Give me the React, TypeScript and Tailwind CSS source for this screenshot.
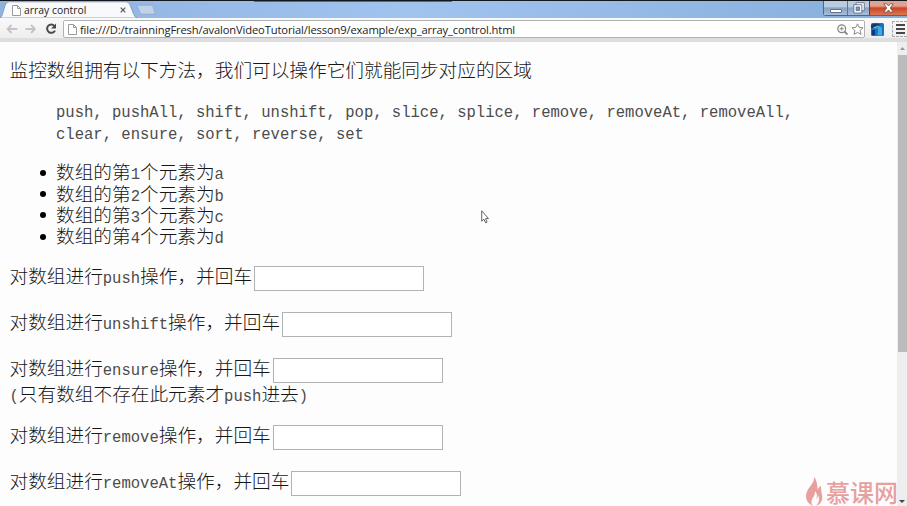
import React from 'react';

const CJK = "font-['Noto_Sans_CJK_SC',sans-serif]";

function Mixed({ text }: { text: string }) {
  const parts = text.split(/([\x20-\x7e]+)/).filter(Boolean);
  return (
    <>
      {parts.map((p, i) =>
        /^[\x20-\x7e]/.test(p) ? (
          <span key={i} className="inline-block origin-[50%_70%] scale-y-[1.1] whitespace-pre font-['Liberation_Mono',monospace] text-[15.56px] leading-[17px] text-[#4c4c4c]">{p}</span>
        ) : (
          <span key={i} className="inline-block">{p}</span>
        ),
      )}
    </>
  );
}

function PageIcon() {
  return (
    <svg width="9" height="11" viewBox="0 0 9 11" className="shrink-0" fill="#fff" stroke="#9a9a9a">
      <path d="M.5.5h5l3 3v7h-8z" />
      <path d="M5.500.5v3h3" fill="none" />
    </svg>
  );
}

function TabBar() {
  return (
    <div className="relative flex h-[18px] shrink-0 border-t border-[#15171f] bg-linear-to-r from-[#8fb2de] via-[#a0c4ee] via-45% to-[#86afdb]">
      <svg width="160" height="17" viewBox="0 0 160 17" className="absolute left-0 top-0">
        <path d="M0 17C3 16 4 4 7 1.500L9 .8H126q3 0 4 3l3.500 9q1.500 4 4 4.200z" fill="#f8f9fa" stroke="#7892b5" strokeWidth=".8" />
        <path d="M138 4.200h13q1.500 0 2 1.500l2 6q.5 1.500-1 1.500h-12q-1.500 0-2-1.500l-2.500-6q-.5-1.500.5-1.500z" fill="#bfd2ea" stroke="#8ba8ce" strokeWidth=".8" />
      </svg>
      <div className="relative flex h-full w-[128px] items-center pl-[12px] pt-[1px]">
        <PageIcon />
        <span className="ml-[3px] w-[96px] whitespace-nowrap font-['Open_Sans',sans-serif] text-[10.4px] leading-none text-[#222]">array control</span>
        <svg width="6" height="6" viewBox="0 0 6 6" className="shrink-0" stroke="#555" strokeWidth="1.200"><path d="M.7.7l4.600 4.600M5.300.7L.7 5.300" /></svg>
      </div>
      <div className="absolute left-[254px] top-0 h-px w-[198px] bg-[#4d6a94]" />
      <div className="ml-auto flex h-[15px] rounded-bl-[3px] border-b border-l border-[#53657f]">
        <div className="flex w-[24px] items-end justify-center border-r border-[#62748f] bg-linear-to-b from-[#bbcbe0] from-40% via-[#8ba3c3] via-50% to-[#a5bfdf] pb-[2px]">
          <div className="h-[4px] w-[12px] rounded-[1px] border border-[#63718a] bg-white" />
        </div>
        <div className="flex w-[22px] items-center justify-center border-r border-[#5c3d49] bg-linear-to-b from-[#bbcbe0] from-40% via-[#8ba3c3] via-50% to-[#a5bfdf]">
          <svg width="12" height="12" viewBox="0 0 12 12" fill="#f8f8fa" stroke="#566782" strokeWidth=".8">
            <path d="M3 .7h8.300v8H3z" /><path d="M.8 2.700h8v8.300h-8z" /><path d="M3.200 5h3.300v3.500H3.200z" fill="#8298b5" />
          </svg>
        </div>
        <div className="flex w-[37px] items-center justify-center bg-linear-to-b from-[#dfa394] from-35% via-[#c84628] via-50% to-[#dc7654]">
          <svg width="11" height="10" viewBox="0 0 11 10" fill="#fff" stroke="#71453f" strokeWidth=".8"><path d="M.8.8h3L5.500 3 7.200.8h3L7.300 5l3 4.200h-3L5.500 7 3.700 9.200h-3l3-4.200z" /></svg>
        </div>
      </div>
    </div>
  );
}

function Toolbar() {
  return (
    <div className="flex h-[24px] shrink-0 items-start border-b-[4px] border-[#dedee0] bg-linear-to-b from-[#f9f9fa] to-[#eeeeef] pl-[6px] pt-[2px]">
      <svg width="12" height="10" viewBox="0 0 12 10" fill="none" stroke="#c4c4c6" strokeWidth="1.900" className="mt-[4px] shrink-0"><path d="M5.500 1L1.700 5l3.800 4M2 5h9.300" /></svg>
      <svg width="12" height="10" viewBox="0 0 12 10" fill="none" stroke="#c4c4c6" strokeWidth="1.900" className="ml-[7px] mt-[4px] shrink-0"><path d="M6 1l3.800 4L6 9M9.500 5H.5" /></svg>
      <svg width="12" height="12" viewBox="0 0 12 12" className="ml-[8px] mt-[3px] shrink-0"><path d="M9.400 2.800A4.200 4.200 0 1 0 10 7.600" fill="none" stroke="#4b4b4d" strokeWidth="2" /><path d="M11 .5v5H6z" fill="#4b4b4d" /></svg>
      <div className="ml-[6px] flex h-[18px] w-[803px] items-center rounded-[2px] border border-[#b0b2b6] bg-white pl-[4px]">
        <PageIcon />
        <span className="ml-[3px] mt-px whitespace-nowrap font-['Open_Sans',sans-serif] text-[11.2px] leading-none tracking-[-0.14px] text-[#222]">file:///D:/trainningFresh/avalonVideoTutorial/lesson9/example/exp_array_control.html</span>
        <svg width="11" height="11" viewBox="0 0 11 11" fill="none" stroke="#858587" strokeWidth="1.200" className="ml-auto"><circle cx="4.700" cy="4.700" r="3.900" /><path d="M7.500 7.500l3 3" strokeWidth="1.800" /><path d="M2.700 4.700h4M4.700 2.700v4" strokeWidth="1" /></svg>
        <svg width="13" height="12" viewBox="0 0 13 12" fill="#fff" stroke="#8a8a8c" className="ml-[3px]"><path d="M6.500.8l1.600 3.600 4 .4-3 2.700.9 3.900-3.500-2-3.500 2 .9-3.900-3-2.700 4-.4z" /></svg>
      </div>
      <svg width="13" height="13" viewBox="0 0 13 13" className="ml-[6px] mt-[3px] shrink-0">
        <rect width="13" height="13" rx="1.500" fill="#1673be" /><path d="M0 2Q4-1 10 2L6 3.500 5 5H0z" fill="#123d68" /><path d="M4 3.500q5-2.500 7 2v7H6q2-5 0-8z" fill="#42a6e5" /><path d="M2 4.500l4-1-1.500 2z" fill="#e0c648" /><path d="M1 7h3v5H1z" fill="#073e80" />
      </svg>
      <div className="ml-[8px] mt-[1px] flex h-[16px] w-[15px] shrink-0 flex-col justify-center gap-[2px] border border-r-0 border-dashed border-[#aaa] pl-[3px]">
        <div className="h-[2px] w-[9px] bg-[#464648]" /><div className="h-[2px] w-[9px] bg-[#464648]" /><div className="h-[2px] w-[9px] bg-[#464648]" />
      </div>
    </div>
  );
}

function Field({ label, last }: { label: string; last?: boolean }) {
  return (
    <label className={last ? 'flex h-[25px]' : 'mb-[21px] flex h-[25px]'}>
      <span className="mt-[-2px] h-[21px] whitespace-nowrap leading-[21px]"><Mixed text={label} /></span>
      <input className="ml-[2px] h-[25px] w-[170px] border border-[#b2b2b4] bg-white px-1 outline-none" />
    </label>
  );
}

export default function App() {
  return (
    <div className="relative flex h-[506px] w-[907px] flex-col overflow-hidden bg-[#fefdfe]">
      <TabBar />
      <Toolbar />
      <div className="flex min-h-0 flex-1">
        <main className={`${CJK} min-w-0 flex-1 overflow-hidden pl-[9.5px] pt-[16px] text-[18.67px] font-light leading-[21.33px] text-[#161616]`}>
          <p className="h-[21.33px] whitespace-nowrap">监控数组拥有以下方法，我们可以操作它们就能同步对应的区域</p>
          <div className="ml-[46.5px] mt-[19px] h-[42.66px]">
            <div className="h-[21.33px]"><Mixed text="push, pushAll, shift, unshift, pop, slice, splice, remove, removeAt, removeAll," /></div>
            <div className="h-[21.33px]"><Mixed text="clear, ensure, sort, reverse, set" /></div>
          </div>
          <ul className="ml-[30px] mt-[20px]">
            {['1个元素为a', '2个元素为b', '3个元素为c', '4个元素为d'].map((t) => (
              <li key={t} className="flex h-[21.33px] items-center">
                <span className="mr-[10.500px] mt-[2px] h-[6px] w-[6px] rounded-full bg-black" />
                <span className="mt-[-1px] h-[21.33px]"><Mixed text={`数组的第${t}`} /></span>
              </li>
            ))}
          </ul>
          <div className="mt-[20px]">
            <Field label="对数组进行push操作，并回车" />
            <Field label="对数组进行unshift操作，并回车" />
            <Field label="对数组进行ensure操作，并回车" last />
            <p className="mb-[22px] mt-[-1px] h-[21px] leading-[21px]"><Mixed text="(只有数组不存在此元素才push进去)" /></p>
            <Field label="对数组进行remove操作，并回车" />
            <Field label="对数组进行removeAt操作，并回车" last />
          </div>
        </main>
        <div className="flex w-[10px] shrink-0 flex-col bg-[#eeeeef]">
          <div className="flex h-[13px] items-center justify-center"><svg width="5" height="3" viewBox="0 0 5 3"><path d="M0 3L2.500 0 5 3z" fill="#969698" /></svg></div>
          <div className="ml-px h-[297px] bg-[#bbbbbd]" />
          <div className="mt-auto flex h-[10px] items-center justify-center"><svg width="6" height="3" viewBox="0 0 6 3"><path d="M0 0h6L3 3z" fill="#444" /></svg></div>
        </div>
      </div>
      <svg width="8" height="14" viewBox="0 0 8 14" className="absolute left-[481px] top-[210px]"><path d="M.7.8v10.400l2.200-2 1.700 3.600 1.500-.7-1.600-3.500h3z" fill="#fff" stroke="#555" strokeWidth=".9" /></svg>
      <div className="absolute left-[805px] top-[477px] flex items-center text-[#e8a09f]">
        <svg width="18" height="29" viewBox="0 0 18 29" fill="currentColor"><path d="M9 0C10 7 1 11 1 19c0 5 3 8 7 10-3-4-1-7 1-10 1-2 1-4 1-5 3 4 2 6 1 8 2-1 2-3 2-4 2 4 1 8-2 11 5-2 7-6 6-11-.5-3-1-5-1-9-2 1-3 2-3 4C12 8 12 3 9 0z" /></svg>
        <span className={`${CJK} ml-[3px] text-[24px] font-medium leading-[26px]`}>慕课网</span>
      </div>
    </div>
  );
}
